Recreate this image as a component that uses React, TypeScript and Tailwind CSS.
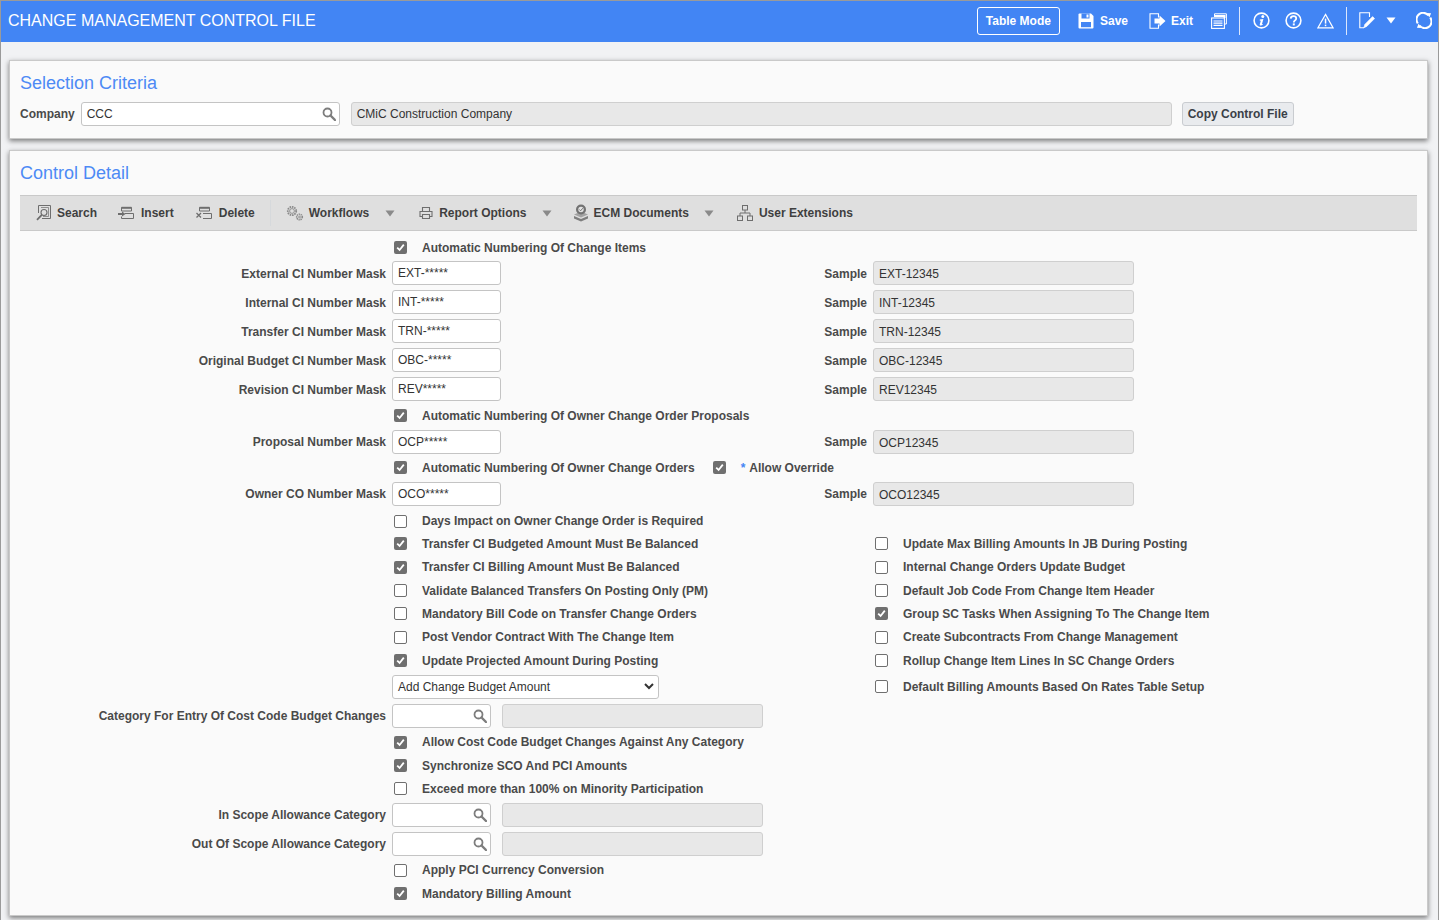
import type { ReactNode } from 'react'

const labelCls = 'text-right text-[12px] font-bold text-[#4a4a4a]'
const checkText = 'text-[12px] font-bold text-[#4a4a4a] whitespace-nowrap'

function SearchIcon() {
  return (
    <svg width="14" height="14" viewBox="0 0 14 14" className="shrink-0">
      <circle cx="5.5" cy="5.5" r="4" fill="none" stroke="#7d7d7d" strokeWidth="1.8" />
      <path d="M8.5 8.5 L13 13" stroke="#7d7d7d" strokeWidth="2.4" strokeLinecap="round" />
    </svg>
  )
}

function Check({ on }: { on?: boolean }) {
  if (on) {
    return (
      <span className="flex h-[13px] w-[13px] shrink-0 items-center justify-center rounded-[2px] bg-[#6f6f6f]">
        <svg width="11" height="11" viewBox="0 0 11 11">
          <path d="M2.2 5.6 L4.6 8 L8.8 2.6" fill="none" stroke="#fff" strokeWidth="1.8" />
        </svg>
      </span>
    )
  }
  return <span className="h-[13px] w-[13px] shrink-0 rounded-[2px] border border-[#6f6f6f] bg-white" />
}

function CheckField({ on, text }: { on?: boolean; text: string }) {
  return (
    <div className="flex items-center pl-[2px]">
      <Check on={on} />
      <span className={`ml-[15px] ${checkText}`}>{text}</span>
    </div>
  )
}

function TextInput({ value, w }: { value: string; w: string }) {
  return (
    <div className={`flex h-[24px] ${w} items-center rounded-[3px] border border-[#c4c4c4] bg-white px-[5px] text-[12px] text-[#333]`}>
      {value}
    </div>
  )
}

function ReadOnly({ value = '', w }: { value?: string; w: string }) {
  return (
    <div className={`flex h-[24px] ${w} items-center rounded-[3px] border border-[#cfcfcf] bg-[#e8e8e8] px-[5px] text-[12px] text-[#333]`}>
      {value}
    </div>
  )
}

function LovInput({ w, value = '' }: { w: string; value?: string }) {
  return (
    <div className={`flex h-[24px] ${w} items-center justify-between rounded-[3px] border border-[#c4c4c4] bg-white pl-[5px] pr-[3px] text-[12px] text-[#333]`}>
      <span>{value}</span>
      <SearchIcon />
    </div>
  )
}

function Row({ h, label, mid, right }: { h: string; label?: string; mid?: ReactNode; right?: ReactNode }) {
  return (
    <div className={`grid ${h} grid-cols-[366px_475px_1fr] items-center gap-x-[6px]`}>
      <div className={labelCls}>{label}</div>
      <div className="flex items-center">{mid}</div>
      <div>{right}</div>
    </div>
  )
}

function MaskRow({ lift = true, label, mask, sample }: { lift?: boolean; label: string; mask: string; sample: string }) {
  return (
    <div className="grid h-[29px] grid-cols-[366px_475px_1fr] items-center gap-x-[6px]">
      <div className={labelCls}>{label}</div>
      <div className="flex items-center justify-between">
        <TextInput value={mask} w={lift ? 'w-[109px] mb-[1px]' : 'w-[109px]'} />
        <span className={labelCls}>Sample</span>
      </div>
      <ReadOnly value={sample} w={lift ? 'w-[261px] mb-[1px] pt-[2px]' : 'w-[261px] pt-[2px]'} />
    </div>
  )
}

function RightCheck({ on, text }: { on?: boolean; text: string }) {
  return <CheckField on={on} text={text} />
}

function Panel({ title, className, children }: { title: string; className: string; children: ReactNode }) {
  return (
    <section className={`ml-[8px] mr-[10px] border border-[#c9c9c9] bg-[#fafafa] px-[10px] shadow-[0_2px_5px_rgba(0,0,0,0.5)] ${className}`}>
      <h2 className="text-[18px] leading-[21px] text-[#4d8af5]">{title}</h2>
      {children}
    </section>
  )
}

function Caret({ color = '#8a8a8a' }: { color?: string }) {
  return (
    <svg width="10" height="7" viewBox="0 0 10 7" className="shrink-0">
      <path d="M0.5 0.5 H9.5 L5 6.5 Z" fill={color} />
    </svg>
  )
}

function ToolItem({ icon, text, className = '', gap = 'gap-[5px]' }: { icon: ReactNode; text: string; className?: string; gap?: string }) {
  return (
    <div className={`flex items-center ${gap} text-[12px] font-bold text-[#3f3f3f] ${className}`}>
      {icon}
      <span className="whitespace-nowrap">{text}</span>
    </div>
  )
}

const g = '#6e6e6e'

const ToolSearch = (
  <svg width="16" height="16" viewBox="0 0 16 16" fill="none" stroke={g} strokeWidth="1">
    <path d="M2.5 8 V0.5 H14.5 V13.5 H6" />
    <path d="M5 2.5 H12.5 V11.5 H7" strokeWidth="0.7" />
    <circle cx="8" cy="7.5" r="3" strokeWidth="1.1" />
    <path d="M5.8 9.8 L1 14.8" strokeWidth="1.8" />
  </svg>
)

const ToolInsert = (
  <svg width="16" height="14" viewBox="0 0 16 14" fill="none" stroke={g} strokeWidth="1">
    <path d="M3.5 5 V1.5 H13.5 V5 Z" />
    <path d="M3.5 1.8 H13.5" strokeWidth="2" />
    <path d="M7 7.5 H15.5 V12.5 H3.5 V10.5" />
    <path d="M0 8 H4" strokeWidth="2" />
    <path d="M4 5.5 L7.5 8 L4 10.5 Z" fill={g} stroke="none" />
  </svg>
)

const ToolDelete = (
  <svg width="16" height="14" viewBox="0 0 16 14" fill="none" stroke={g} strokeWidth="1">
    <path d="M3.5 5 V1.5 H13.5 V5 Z" />
    <path d="M3.5 1.8 H13.5" strokeWidth="2" />
    <path d="M7 7.5 H15.5 V12.5 H7" />
    <path d="M0.5 7 L5 11.5 M5 7 L0.5 11.5" strokeWidth="1.3" />
  </svg>
)

const ToolGears = (
  <svg width="18" height="16" viewBox="0 0 18 16" fill="none" stroke="#8a8a8a">
    <circle cx="6" cy="6" r="4.2" strokeWidth="1.8" strokeDasharray="1.6 0.8" />
    <circle cx="6" cy="6" r="2.4" strokeWidth="0.9" />
    <circle cx="13.5" cy="12" r="2.8" strokeWidth="1.6" strokeDasharray="1.3 0.7" />
    <circle cx="13.5" cy="12" r="0.9" strokeWidth="0.9" />
  </svg>
)

const ToolPrinter = (
  <svg width="14" height="14" viewBox="0 0 14 14" fill="none" stroke={g} strokeWidth="1.1">
    <path d="M3.5 5 V1.5 H10.5 V5" />
    <path d="M3 10.5 H1 V5.5 H13 V10.5 H11" />
    <path d="M3.5 8.5 H10.5 V12.5 H3.5 Z" />
  </svg>
)

const ToolEcm = (
  <svg width="16" height="18" viewBox="0 0 16 18">
    <path d="M1 10.5 L8 7.5 L15 10.5 L8 13.5 Z" fill="#a3a3a3" />
    <path d="M1 12 L8 15 L15 12 V14.5 L8 17.6 L1 14.5 Z" fill="#7e7e7e" />
    <circle cx="8" cy="5.5" r="5" fill="#727272" />
    <circle cx="8" cy="5.5" r="2.7" fill="#e4e4e4" />
    <path d="M6.4 5.5 L7.6 6.8 L9.8 4.2" stroke="#727272" strokeWidth="1" fill="none" />
  </svg>
)

const ToolTree = (
  <svg width="16" height="16" viewBox="0 0 16 16" fill="none" stroke={g} strokeWidth="1">
    <rect x="5.5" y="0.5" width="5" height="4.5" />
    <rect x="0.5" y="11" width="5" height="4.5" />
    <rect x="10.5" y="11" width="5" height="4.5" />
    <path d="M8 5 V8 M3 11 V8 H13 V11" />
  </svg>
)

function HeaderIcons() {
  return (
    <>
      <svg width="16" height="16" viewBox="0 0 16 16" className="ml-[18px]">
        <path d="M0.5 1.5 Q0.5 0.5 1.5 0.5 H13 L15.5 3 V14.5 Q15.5 15.5 14.5 15.5 H1.5 Q0.5 15.5 0.5 14.5 Z" fill="#fff" />
        <rect x="3.5" y="0.5" width="8" height="5" fill="#4285f4" />
        <rect x="8.5" y="1.5" width="2" height="3" fill="#fff" />
        <rect x="3" y="9" width="10" height="5.2" fill="#4285f4" />
      </svg>
      <span className="ml-[6px] text-[12px] font-bold text-white">Save</span>
      <svg width="17" height="16" viewBox="0 0 17 16" className="ml-[21px]">
        <path d="M9.5 4.5 V0.8 H1 V15.2 H9.5 V11.5" fill="none" stroke="#fff" strokeWidth="1.1" />
        <path d="M5.5 5.5 H10.5 V2.5 L16.5 8 L10.5 13.5 V10.5 H5.5 Z" fill="#fff" />
      </svg>
      <span className="ml-[5px] text-[12px] font-bold text-white">Exit</span>
      <svg width="16" height="16" viewBox="0 0 16 16" fill="none" stroke="#fff" className="ml-[18px]">
        <path d="M3.5 2 V0.8 H15.4 V11 H14" strokeWidth="1" />
        <path d="M3 3 H13.5 V5" strokeWidth="2" />
        <rect x="0.6" y="5" width="12.8" height="10.4" strokeWidth="1.1" />
        <path d="M2.5 8 H11.5 M2.5 10.2 H11.5 M2.5 12.4 H11.5" strokeWidth="1.2" />
      </svg>
      <span className="ml-[12px] h-[28px] w-px bg-[#dbe7fd]" />
      <svg width="17" height="17" viewBox="0 0 17 17" className="ml-[13px]">
        <circle cx="8.5" cy="8.5" r="7.4" fill="none" stroke="#fff" strokeWidth="1.6" />
        <circle cx="9.8" cy="4.6" r="1.5" fill="#fff" />
        <path d="M6.8 7.6 L10.4 7.1 L9 12 Q8.9 12.6 9.9 12 L10.1 12.6 Q8.4 13.9 7.1 13.4 Q6.5 13.1 6.8 12.2 L7.8 8.7 L6.7 8.6 Z" fill="#fff" />
      </svg>
      <svg width="17" height="17" viewBox="0 0 17 17" className="ml-[15px]">
        <circle cx="8.5" cy="8.5" r="7.4" fill="none" stroke="#fff" strokeWidth="1.6" />
        <path d="M5.7 6.6 Q5.9 4.2 8.5 4.2 Q11.2 4.2 11.2 6.4 Q11.2 7.6 9.9 8.4 Q8.8 9.1 8.8 10.4" fill="none" stroke="#fff" strokeWidth="1.8" />
        <rect x="7.8" y="11.4" width="2" height="2" fill="#fff" />
      </svg>
      <svg width="17" height="16" viewBox="0 0 17 16" className="ml-[15px]">
        <path d="M8.5 1.4 L16 14.8 H1 Z" fill="none" stroke="#fff" strokeWidth="1.2" />
        <rect x="7.8" y="5.6" width="1.5" height="5" fill="#fff" />
        <rect x="7.8" y="11.6" width="1.5" height="1.6" fill="#fff" />
      </svg>
      <span className="ml-[12px] h-[28px] w-px bg-[#dbe7fd]" />
      <svg width="16" height="17" viewBox="0 0 16 17" fill="none" stroke="#fff" className="ml-[12px]">
        <path d="M10.5 5 V0.8 H0.8 V15.8 H5" strokeWidth="1.1" />
        <path d="M4.8 15.8 L5.8 12.4 L13.6 4.6 L15.6 6.6 L7.8 14.4 Z" fill="#fff" strokeWidth="0.6" />
      </svg>
      <span className="ml-[11px]">
        <Caret color="#fff" />
      </span>
      <svg width="16" height="17" viewBox="0 0 17 17" fill="none" className="ml-[20px]">
        <path d="M1.9 11.5 A7 7 0 0 1 13.2 3.2" stroke="#fff" strokeWidth="2.2" />
        <path d="M15.1 5.5 A7 7 0 0 1 3.8 13.8" stroke="#fff" strokeWidth="2.2" />
        <path d="M11.5 0.4 L16 0.8 L14.2 5.2 Z M5.5 16.6 L1 16.2 L2.8 11.8 Z" fill="#fff" />
      </svg>
    </>
  )
}

export default function App() {
  return (
    <div className="h-[920px] overflow-hidden border-x border-t border-[#9a9a9a] bg-[#f1f2f4] font-['Liberation_Sans',Arial,sans-serif]">
      <header className="flex h-[41px] items-center justify-between bg-[#4285f4] pb-[2px] pl-[7px] pr-[6px]">
        <h1 className="text-[16px] text-white">CHANGE MANAGEMENT CONTROL FILE</h1>
        <div className="flex items-center">
          <div className="flex h-[28px] items-center rounded-[3px] border border-white px-[8px] text-[12px] font-bold text-white">
            Table Mode
          </div>
          <HeaderIcons />
        </div>
      </header>

      <Panel title="Selection Criteria" className="mt-[18px] h-[79px] pt-[12px]">
        <div className="mt-[8px] flex items-center">
          <span className="mb-[1px] text-[12px] font-bold text-[#4a4a4a]">Company</span>
          <LovInput w="w-[259px] ml-[6px] mb-[1px]" value="CCC" />
          <ReadOnly value="CMiC Construction Company" w="w-[821px] ml-[11px] mb-[1px]" />
          <div className="mb-[1px] ml-[10px] flex h-[24px] items-center rounded-[3px] border border-[#c9ccd0] bg-[#e9ebee] px-[5px] text-[12px] font-bold text-[#3a3f47]">
            Copy Control File
          </div>
        </div>
      </Panel>

      <Panel title="Control Detail" className="mt-[11px] h-[766px] pt-[12px]">
        <div className="mt-[11px] flex h-[36px] items-center border-y border-[#c9c9c9] bg-[#dfdfdf] pl-[16px]">
          <ToolItem icon={ToolSearch} text="Search" />
          <ToolItem icon={ToolInsert} text="Insert" className="ml-[21px]" gap="gap-[7px]" />
          <ToolItem icon={ToolDelete} text="Delete" className="ml-[22px]" gap="gap-[7px]" />
          <span className="ml-[15px] h-[26px] w-px bg-[#d6d9dc]" />
          <ToolItem icon={ToolGears} text="Workflows" className="ml-[15px]" />
          <span className="ml-[16px]"><Caret /></span>
          <ToolItem icon={ToolPrinter} text="Report Options" className="ml-[24px]" gap="gap-[6px]" />
          <span className="ml-[15px]"><Caret /></span>
          <ToolItem icon={ToolEcm} text="ECM Documents" className="ml-[21px]" gap="gap-[5px]" />
          <span className="ml-[15px]"><Caret /></span>
          <ToolItem icon={ToolTree} text="User Extensions" className="ml-[23px]" gap="gap-[6px]" />
        </div>

        <div className="pt-[5px]">
          <Row h="h-[23px]" mid={<CheckField on text="Automatic Numbering Of Change Items" />} />
          <MaskRow label="External CI Number Mask" mask="EXT-*****" sample="EXT-12345" />
          <MaskRow label="Internal CI Number Mask" mask="INT-*****" sample="INT-12345" />
          <MaskRow label="Transfer CI Number Mask" mask="TRN-*****" sample="TRN-12345" />
          <MaskRow label="Original Budget CI Number Mask" mask="OBC-*****" sample="OBC-12345" />
          <MaskRow label="Revision CI Number Mask" mask="REV*****" sample="REV12345" />
          <Row h="h-[23px]" mid={<CheckField on text="Automatic Numbering Of Owner Change Order Proposals" />} />
          <MaskRow lift={false} label="Proposal Number Mask" mask="OCP*****" sample="OCP12345" />
          <Row
            h="h-[23px]"
            mid={
              <>
                <CheckField on text="Automatic Numbering Of Owner Change Orders" />
                <span className="ml-[18px]"><Check on /></span>
                <span className="ml-[15px] text-[12px] font-bold text-[#4a4a4a]"><span className="mr-[1px] text-[#4285f4]">*</span> Allow Override</span>
              </>
            }
          />
          <MaskRow lift={false} label="Owner CO Number Mask" mask="OCO*****" sample="OCO12345" />
          <Row h="h-[24px] pt-[2px]" mid={<CheckField text="Days Impact on Owner Change Order is Required" />} />
          <Row h="h-[23px]" mid={<CheckField on text="Transfer CI Budgeted Amount Must Be Balanced" />} right={<RightCheck text="Update Max Billing Amounts In JB During Posting" />} />
          <Row h="h-[24px]" mid={<CheckField on text="Transfer CI Billing Amount Must Be Balanced" />} right={<RightCheck text="Internal Change Orders Update Budget" />} />
          <Row h="h-[23px]" mid={<CheckField text="Validate Balanced Transfers On Posting Only (PM)" />} right={<RightCheck text="Default Job Code From Change Item Header" />} />
          <Row h="h-[23px]" mid={<CheckField text="Mandatory Bill Code on Transfer Change Orders" />} right={<RightCheck on text="Group SC Tasks When Assigning To The Change Item" />} />
          <Row h="h-[24px]" mid={<CheckField text="Post Vendor Contract With The Change Item" />} right={<RightCheck text="Create Subcontracts From Change Management" />} />
          <Row h="h-[23px]" mid={<CheckField on text="Update Projected Amount During Posting" />} right={<RightCheck text="Rollup Change Item Lines In SC Change Orders" />} />
          <Row
            h="h-[29px]"
            mid={
              <div className="flex h-[24px] w-[267px] items-center justify-between rounded-[3px] border border-[#c4c4c4] bg-white pl-[5px] pr-[4px] text-[12px] text-[#333]">
                <span>Add Change Budget Amount</span>
                <svg width="10" height="7" viewBox="0 0 10 7">
                  <path d="M1 1 L5 5 L9 1" fill="none" stroke="#333" strokeWidth="2" />
                </svg>
              </div>
            }
            right={<RightCheck text="Default Billing Amounts Based On Rates Table Setup" />}
          />
          <Row
            h="h-[29px]"
            label="Category For Entry Of Cost Code Budget Changes"
            mid={
              <>
                <LovInput w="w-[99px]" />
                <ReadOnly w="w-[261px] ml-[11px]" />
              </>
            }
          />
          <Row h="h-[24px]" mid={<CheckField on text="Allow Cost Code Budget Changes Against Any Category" />} />
          <Row h="h-[23px]" mid={<CheckField on text="Synchronize SCO And PCI Amounts" />} />
          <Row h="h-[23px]" mid={<CheckField text="Exceed more than 100% on Minority Participation" />} />
          <Row
            h="h-[29px]"
            label="In Scope Allowance Category"
            mid={
              <>
                <LovInput w="w-[99px]" />
                <ReadOnly w="w-[261px] ml-[11px]" />
              </>
            }
          />
          <Row
            h="h-[29px]"
            label="Out Of Scope Allowance Category"
            mid={
              <>
                <LovInput w="w-[99px]" />
                <ReadOnly w="w-[261px] ml-[11px]" />
              </>
            }
          />
          <Row h="h-[24px]" mid={<CheckField text="Apply PCI Currency Conversion" />} />
          <Row h="h-[23px]" mid={<CheckField on text="Mandatory Billing Amount" />} />
        </div>
      </Panel>
    </div>
  )
}
